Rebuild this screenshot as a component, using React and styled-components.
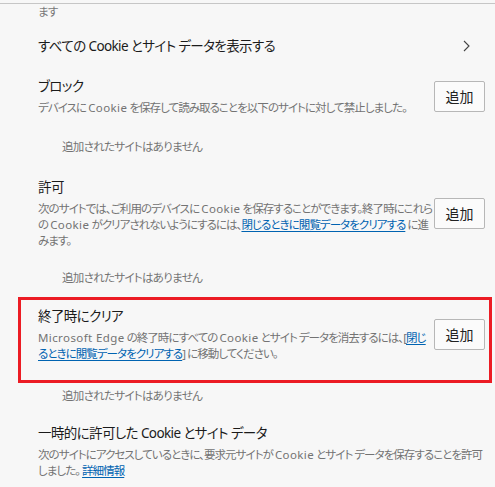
import React from 'react';
import styled, { createGlobalStyle } from 'styled-components';

const GlobalStyle = createGlobalStyle`
  body {
    margin: 0;
    background: #f7f7f7;
    font-family: "Noto Sans", "Noto Sans CJK JP", sans-serif;
    font-feature-settings: "palt";
    color: #1b1b1b;
  }
`;

const Page = styled.div`
  margin-top: 3px;
  border-top: 1px solid #c6c6c6;
  width: 495px;
  height: 483px;
  overflow: hidden;
`;

const Continued = styled.div`
  padding: 1px 0 0 38px;
  font-size: 11.5px;
  line-height: 13px;
  letter-spacing: -0.7px;
  color: #777;
`;

const LinkRow = styled.div`
  display: flex;
  align-items: center;
  justify-content: space-between;
  margin-top: 18px;
  padding: 0 25px 0 38px;
  font-size: 13.5px;
  line-height: 20px;
  letter-spacing: -0.6px;
`;

const Section = styled.div`
  display: flex;
  align-items: center;
  margin-top: ${(p) => p.$top}px;
  padding: 0 10px 0 38px;

  ${(p) =>
    p.$highlight &&
    `
    margin-left: 18px;
    margin-right: 3px;
    border: 3px solid #ec1c24;
    padding: 6px 4px 18px 17px;
  `}
`;

const TextCol = styled.div`
  flex: 1;
  min-width: 0;
`;

const Title = styled.div`
  font-size: 13.5px;
  line-height: 20px;
  letter-spacing: -0.6px;
  color: #1b1b1b;
`;

const Desc = styled.div`
  margin-top: 4px;
  font-size: 11.5px;
  line-height: 16px;
  letter-spacing: -0.95px;
  color: #737373;
`;

// latin words keep a looser tracking inside the tightened japanese text
const Latin = styled.span`
  letter-spacing: 0.4px;
`;

const InlineLink = styled.a`
  color: #0063b1;
  text-decoration: underline;
  text-underline-offset: 2px;
  cursor: pointer;
`;

const AddButton = styled.button`
  flex: none;
  width: 51px;
  height: 31px;
  padding: 0;
  border: 1px solid #b7b7b7;
  border-radius: 2px;
  background: #fbfbfb;
  font-family: inherit;
  font-size: 14px;
  color: #222;
`;

const Empty = styled.div`
  margin-top: ${(p) => p.$top}px;
  padding-left: 62px;
  font-size: 11.5px;
  line-height: 16px;
  letter-spacing: -0.7px;
  color: #737373;
`;

const Chevron = () => (
  <svg width="7" height="12" viewBox="0 0 7 12" fill="none">
    <polyline points="1,1 6,6 1,11" stroke="#444" strokeWidth="1.1" />
  </svg>
);

const App = () => (
  <>
    <GlobalStyle />
    <Page>
      <Continued>ます</Continued>

      <LinkRow>
        <span>すべての Cookie とサイト データを表示する</span>
        <Chevron />
      </LinkRow>

      <Section $top={20}>
        <TextCol>
          <Title>ブロック</Title>
          <Desc>
            デバイスに <Latin>Cookie</Latin> を保存して読み取ることを以下のサイトに対して禁止しました。
          </Desc>
        </TextCol>
        <AddButton>追加</AddButton>
      </Section>
      <Empty $top={23}>追加されたサイトはありません</Empty>

      <Section $top={22}>
        <TextCol>
          <Title>許可</Title>
          <Desc>
            次のサイトでは、ご利用のデバイスに <Latin>Cookie</Latin> を保存することができます。終了時にこれらの{' '}
            <Latin>Cookie</Latin> がクリアされないようにするには、
            <InlineLink>閉じるときに閲覧データをクリアする</InlineLink> に進みます。
          </Desc>
        </TextCol>
        <AddButton>追加</AddButton>
      </Section>
      <Empty $top={21}>追加されたサイトはありません</Empty>

      <Section $top={11} $highlight>
        <TextCol>
          <Title>終了時にクリア</Title>
          <Desc>
            <Latin>Microsoft Edge</Latin> の終了時にすべての <Latin>Cookie</Latin> とサイト データを消去するには、[
            <InlineLink>閉じるときに閲覧データをクリアする</InlineLink>] に移動してください。
          </Desc>
        </TextCol>
        <AddButton>追加</AddButton>
      </Section>
      <Empty $top={5}>追加されたサイトはありません</Empty>

      <Section $top={19}>
        <TextCol>
          <Title>一時的に許可した Cookie とサイト データ</Title>
          <Desc>
            次のサイトにアクセスしているときに、要求元サイトが <Latin>Cookie</Latin>{' '}
            とサイト データを保存することを許可しました。 <InlineLink>詳細情報</InlineLink>
          </Desc>
        </TextCol>
      </Section>
    </Page>
  </>
);

export default App;
